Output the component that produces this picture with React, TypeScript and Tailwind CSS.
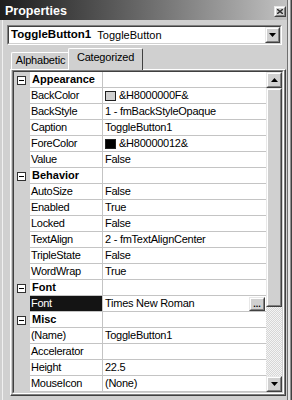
import React from "react";

type Row = {
  cat?: boolean;
  name: string;
  value?: string;
  swatch?: "light" | "dark";
  selected?: boolean;
};

const rows: Row[] = [
  { cat: true, name: "Appearance" },
  { name: "BackColor", value: "&H8000000F&", swatch: "light" },
  { name: "BackStyle", value: "1 - fmBackStyleOpaque" },
  { name: "Caption", value: "ToggleButton1" },
  { name: "ForeColor", value: "&H80000012&", swatch: "dark" },
  { name: "Value", value: "False" },
  { cat: true, name: "Behavior" },
  { name: "AutoSize", value: "False" },
  { name: "Enabled", value: "True" },
  { name: "Locked", value: "False" },
  { name: "TextAlign", value: "2 - fmTextAlignCenter" },
  { name: "TripleState", value: "False" },
  { name: "WordWrap", value: "True" },
  { cat: true, name: "Font" },
  { name: "Font", value: "Times New Roman", selected: true },
  { cat: true, name: "Misc" },
  { name: "(Name)", value: "ToggleButton1" },
  { name: "Accelerator", value: "" },
  { name: "Height", value: "22.5" },
  { name: "MouseIcon", value: "(None)" },
];

// classic raised 3D button face
function Raised({ className, children }: { className: string; children?: React.ReactNode }) {
  return (
    <div className={`border border-t-[#e8e8e8] border-l-[#e8e8e8] border-r-[#404040] border-b-[#404040] ${className}`}>
      <div className="w-full h-full flex items-center justify-center bg-[#d0d0d0] border border-t-white border-l-white border-r-[#808080] border-b-[#808080]">
        {children}
      </div>
    </div>
  );
}

function Arrow({ up }: { up?: boolean }) {
  return (
    <svg width="7" height="4" viewBox="0 0 7 4">
      {up ? <polygon points="0,4 7,4 3.5,0" fill="#000" /> : <polygon points="0,0 7,0 3.5,4" fill="#000" />}
    </svg>
  );
}

function MinusBox() {
  return (
    <div className="ml-[3px] w-[9px] h-[9px] border border-[#303030] bg-white flex items-center justify-center">
      <div className="w-[5px] h-[1px] bg-black" />
    </div>
  );
}

function PropRow({ r }: { r: Row }) {
  return (
    <div className="flex h-[16px]">
      <div className="w-[16px] bg-[#d0d0d0] flex items-center">{r.cat && <MinusBox />}</div>
      {r.selected ? (
        <div className="w-[73px] border-b border-r border-[#c4c4c4] bg-[#141414] text-white pl-[1px] leading-[15px] tracking-[-0.3px]">
          {r.name}
        </div>
      ) : r.cat ? (
        <div className="w-[73px] border-b border-r border-[#c4c4c4] bg-white pl-[2px] leading-[15px] font-bold">
          {r.name}
        </div>
      ) : (
        <div className="w-[73px] border-b border-r border-[#c4c4c4] bg-white pl-[1px] leading-[15px] tracking-[-0.3px]">
          {r.name}
        </div>
      )}
      <div className="flex-1 flex items-center border-b border-[#c4c4c4] bg-white pl-[2px] leading-[15px] tracking-[-0.25px]">
        {r.swatch === "light" && <div className="w-[11px] h-[10px] border border-[#202020] bg-[#d0d0d0] mr-[3px]" />}
        {r.swatch === "dark" && <div className="w-[11px] h-[10px] border border-[#202020] bg-black mr-[3px]" />}
        <span className="flex-1">{r.value}</span>
        {r.selected && (
          <Raised className="w-[16px] h-[14px] mr-[1px]">
            <span className="text-[9px] font-bold leading-[6px] tracking-normal">...</span>
          </Raised>
        )}
      </div>
    </div>
  );
}

export default function App() {
  return (
    <div className="w-[292px] h-[400px] bg-[#d0d0d0] flex overflow-hidden font-['Liberation_Sans',Arial,sans-serif] text-[11px] text-black">
      <div className="w-[287px] flex flex-col">
        {/* title bar */}
        <div className="h-[20px] flex items-start justify-between bg-gradient-to-r from-[#1e1e1e] to-[#c2c2c2] pl-[5px] pr-[1px]">
          <span className="text-white font-bold text-[12.5px] leading-[16px] mt-[3px]">Properties</span>
          <Raised className="w-[12px] h-[11px] mt-[6px]">
            <svg width="6" height="5" viewBox="0 0 6 5">
              <path d="M0 0 L6 5 M6 0 L0 5" stroke="#303030" strokeWidth="1.4" />
            </svg>
          </Raised>
        </div>

        <div className="flex-1 flex flex-col border-l border-[#f0f0f0] ml-[2px]">
          {/* object combo */}
          <div className="mt-[5px] ml-[4px] w-[275px] h-[20px] border border-t-[#808080] border-l-[#808080] border-r-white border-b-white">
            <div className="w-full h-full flex items-center bg-white border border-t-[#404040] border-l-[#404040] border-r-[#d0d0d0] border-b-[#d0d0d0]">
              <span className="ml-[2px] font-bold text-[11.5px]">ToggleButton1</span>
              <span className="ml-[6px] flex-1">ToggleButton</span>
              <Raised className="w-[15px] h-[16px]">
                <Arrow />
              </Raised>
            </div>
          </div>

          {/* tabs */}
          <div className="mt-[3px] h-[21px] flex items-start ml-[8px]">
            <div className="mt-[4px] w-[59px] h-[17px] border-t border-l border-white border-r border-r-[#404040] rounded-t-[2px] flex justify-center leading-[14px] tracking-[-0.2px]">
              Alphabetic
            </div>
            <div className="relative z-10 -ml-[2px] w-[75px] h-[22px] bg-[#d0d0d0] border-t border-l border-white border-r border-r-[#404040] rounded-t-[2px] flex justify-center pt-[1px] leading-[14px]">
              <span className="tracking-[-0.2px]">Categorized</span>
            </div>
          </div>

          {/* panel */}
          <div className="ml-[7px] w-[276px] h-[327px] border-t border-l border-white border-r border-b border-r-[#404040] border-b-[#404040]">
            <div className="w-full h-full pl-[1px] border-r border-b border-r-[#808080] border-b-[#808080]">
              {/* grid */}
              <div className="w-[272px] h-[324px] border border-t-[#808080] border-l-[#808080] border-r-white border-b-white">
                <div className="w-full h-full flex border border-t-[#404040] border-l-[#404040] border-r-[#d0d0d0] border-b-[#d0d0d0]">
                  <div className="flex-1 flex flex-col">
                    {rows.map((r, i) => (
                      <PropRow key={i} r={r} />
                    ))}
                  </div>
                  {/* scrollbar */}
                  <div className="w-[16px] flex flex-col">
                    <Raised className="h-[16px]">
                      <Arrow up />
                    </Raised>
                    <Raised className="h-[219px]" />
                    <div className="flex-1 bg-[repeating-conic-gradient(#f4f4f4_0_25%,#d6d6d6_0_50%)] bg-[length:2px_2px]" />
                    <Raised className="h-[16px]">
                      <Arrow />
                    </Raised>
                  </div>
                </div>
              </div>
            </div>
          </div>
        </div>
      </div>
      {/* right window frame */}
      <div className="w-[5px] h-full border-l border-[#707070] bg-[#e4e4e4]">
        <div className="ml-[2px] h-full border-l border-r border-l-[#909090] border-r-[#404040]" />
      </div>
    </div>
  );
}
